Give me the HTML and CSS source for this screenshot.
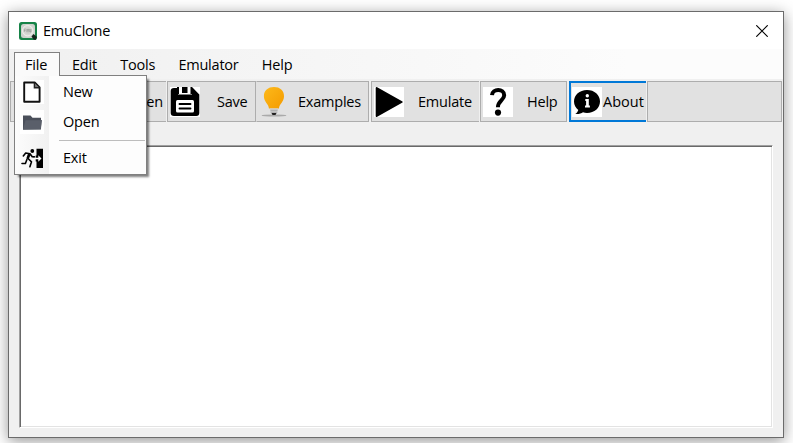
FILE: index.html
```html
<!DOCTYPE html>
<html lang="en">
<head>
<meta charset="utf-8">
<title>EmuClone</title>
<link rel="stylesheet" href="styles.css">
</head>
<body>
<main class="window">
  <header class="titlebar">
    <svg class="app-icon" viewBox="0 0 18 18"><defs><radialGradient id="disc"><stop offset="0" stop-color="#bfc3be"/><stop offset=".6" stop-color="#d9dbd7"/><stop offset="1" stop-color="#cdd1cc"/></radialGradient></defs><rect width="18" height="18" rx="2.500" fill="#168347"/><rect x="2" y="2" width="14" height="14" rx="2.500" fill="url(#disc)"/><circle cx="8.7" cy="8.7" r="5.2" fill="none" stroke="#f0f0ec" stroke-width=".9"/><path d="M5.3 10V7h1.5M5.3 8.5h1.2M8 10V7l1 1.5L10 7v3M11 7v3h1V7" fill="none" stroke="#8e948e" stroke-width=".6"/><path d="M12.500 14.500l2-2.500 3.500 3-1.400 3-2-.4z" fill="#14251b"/></svg>
    <h1 class="title">EmuClone</h1>
    <svg class="close" viewBox="0 0 12 12"><path d="M.3.3l11.4 11.4M11.7.3L.3 11.7" stroke="#000" stroke-width="1.15"/></svg>
  </header>
  <nav class="menubar">
    <div class="menu-item file">File
      <div class="dropdown">
        <div class="row">
          <svg class="menu-icon" viewBox="0 0 24 24"><rect width="24" height="24" fill="#fff"/><path d="M4.200 2.500h10.500l4.900 4.900v14.300H4.200z" fill="#fff" stroke="#111" stroke-width="1.900" stroke-linejoin="round"/><path d="M14.400 2.800v4.900h5" fill="#777" stroke="#222" stroke-width="1.400"/></svg>
          <span>New</span>
        </div>
        <div class="row">
          <svg class="menu-icon" viewBox="0 0 24 24"><rect width="24" height="24" fill="#fff"/><path d="M3 5.5h7.5l2 2.3H21V10h.8l-.9 9.5L3 19.8z" fill="#4b505b"/><path d="M3.2 19.3l2.3-9.1h16.2l-1 9.1z" fill="#5a5f6a"/></svg>
          <span>Open</span>
        </div>
        <div class="divider"></div>
        <div class="row">
          <svg class="menu-icon" viewBox="0 0 24 24"><path d="M16.500 2.700H23v19.200h-6.500v-6.500h-.8v-6h.8z" fill="#000"/><circle cx="12.300" cy="5" r="1.900" fill="#000"/><path d="M8 7.600l2.800.8-2.300 5-2.200-.9z" fill="#000"/><path d="M3.300 10l2.400-3 4.300.7 2.200 3 2.200.2M8.600 13l2.900 2.800-1.600 5M6.900 13.500l-1.500 4H2" fill="none" stroke="#000" stroke-width="1.600" stroke-linecap="round" stroke-linejoin="round"/><path d="M14.500 12.500h5" stroke="#fff" stroke-width="1.500"/><path d="M18.300 9.300l3.200 3.200-3.200 3.200z" fill="#fff"/></svg>
          <span>Exit</span>
        </div>
      </div>
    </div>
    <div class="menu-item">Edit</div>
    <div class="menu-item">Tools</div>
    <div class="menu-item">Emulator</div>
    <div class="menu-item">Help</div>
  </nav>
  <div class="toolbar">
    <div class="tool new"></div>
    <div class="tool open">Open</div>
    <div class="tool save">
      <svg class="tool-icon" viewBox="0 0 30 30"><rect width="30" height="30" fill="#fff"/><path d="M4 1h19l6.300 6.500V26q0 3-3 3H4q-3.300 0-3.300-3V4Q.7 1 4 1z" fill="#000"/><path d="M8 0h14v7.500H8z" fill="#fff"/><path d="M12 0h5.500v6H12zM7 0h2v7H7zM20.500 0h2v7h-2z" fill="#000"/><rect x="6" y="13" width="18" height="12.500" rx="1.500" fill="#fff"/><path d="M9.500 17h11M9.500 21.500h11" stroke="#000" stroke-width="1.900" stroke-linecap="round"/></svg>
      <span>Save</span>
    </div>
    <div class="tool examples">
      <svg class="tool-icon" viewBox="0 0 30 30"><defs><linearGradient id="bulb" x2="1" y2="1"><stop stop-color="#fdb91a"/><stop offset="1" stop-color="#f49b00"/></linearGradient></defs><ellipse cx="14" cy="28.500" rx="12.500" ry="1.100" fill="#aaa"/><path d="M8.900 21.500c0-4.500-5-6.500-5-12.300C3.900 3.500 8 .1 14 .1s10 3.400 10 9.100c0 5.800-5 7.800-5 12.300z" fill="url(#bulb)"/><path d="M9.800 21.500h8.400l-.8 4-2 2h-3l-2-2z" fill="#d0d1d2"/><path d="M10.500 23.300h7M10.700 25.200h6.500" stroke="#999" stroke-width=".7"/><path d="M11.500 26h5l-1 2h-3z" fill="#222"/></svg>
      <span>Examples</span>
    </div>
    <div class="tool emulate">
      <svg class="tool-icon" viewBox="0 0 30 30"><rect width="30" height="30" fill="#fff"/><path d="M2.700 1.100L27.600 15 2.700 28.900z" fill="#000" stroke="#000" stroke-width="2" stroke-linejoin="round"/></svg>
      <span>Emulate</span>
    </div>
    <div class="tool help">
      <svg class="tool-icon" viewBox="0 0 30 30"><rect width="30" height="30" fill="#fff"/><path d="M9 8.200C9.300 1.300 21.200 1.300 21.200 8.200c0 5-6.300 5.500-6.300 12" fill="none" stroke="#000" stroke-width="4"/><circle cx="15" cy="25.600" r="3.100" fill="#000"/></svg>
      <span>Help</span>
    </div>
    <div class="tool about">
      <svg class="tool-icon" viewBox="0 0 30 30"><rect width="30" height="30" fill="#fff"/><path d="M15 3C7.500 3 2 8 2 14.500c0 3.500 1.700 6.500 4.300 8.500-.4 1.500-1.500 3-3 4 3 .4 5.900-.4 7.700-1.700 1.300.4 2.600.6 4 .6 7.500 0 13-5 13-11.500S22.500 3 15 3z" fill="#000"/><circle cx="15.300" cy="8.700" r="1.700" fill="#fff"/><path d="M13.300 12h3.500v6.500h1.100v2h-4.900v-2h1.100V14h-.8z" fill="#fff"/></svg>
      <span>About</span>
    </div>
    <div class="tool blank"></div>
  </div>
  <div class="editor"></div>
</main>
</body>
</html>
```
FILE: styles.css
```css
* { box-sizing: border-box; }
body {
  margin: 0;
  height: 443px;
  padding: 11px 9px 5px 8px;
  overflow: hidden;
  background: #fff;
  color: #000;
  font: 14.5px/20px "Open Sans", "Noto Sans", sans-serif;
  letter-spacing: -.22px;
}
.window {
  display: flex;
  flex-direction: column;
  height: 427px;
  border: 1px solid #6b6b6b;
  background: #f0f0f0;
  box-shadow: 0 3px 14px rgba(0, 0, 0, .42);
}
.titlebar {
  display: flex;
  align-items: center;
  flex: 0 0 37px;
  padding: 0 15px 0 10px;
  background: #fff;
}
.app-icon { width: 18px; height: 18px; }
.title { margin: 0 auto 0 6px; font: inherit; }
.close { width: 12px; height: 12px; }
.menubar {
  display: flex;
  flex: 0 0 30px;
  padding: 3px 0 0 5px;
  background: linear-gradient(90deg, #f0f0f0, #fcfcfc 80%);
}
.menu-item { height: 24px; padding: 3px 11.3px 0 12px; line-height: 20px; white-space: nowrap; }
.file {
  position: relative;
  z-index: 2;
  width: 46px;
  padding: 2px 0 0 10px;
  border: 1px solid #808080;
  border-bottom: 0;
  background: #fafafa;
}
.dropdown {
  position: absolute;
  top: 22px;
  left: -1px;
  width: 133px;
  height: 100px;
  padding: 3px 0 0;
  border: 1px solid #808080;
  background: linear-gradient(90deg, #fcfcfc, #f1f1f1 34px, #fdfdfd 34px);
  box-shadow: 3px 3px 2px -1px rgba(0, 0, 0, .5);
}
.dropdown::before {
  content: "";
  position: absolute;
  top: -1px;
  left: 0;
  width: 44px;
  height: 1px;
  background: #fafafa;
}
.row { display: flex; align-items: center; height: 30px; padding: 0 0 5px 5px; gap: 19px; }
.row:first-child, .row:nth-child(2) { padding-bottom: 4px; }
.row:last-child { padding-bottom: 2px; }
.menu-icon { width: 24px; height: 24px; }
.divider { height: 1px; margin: 1px 1px 3px 44px; background: #bdbdbd; }
.toolbar { display: flex; flex: 0 0 41px; margin: 2px 0 0 1px; }
.tool {
  display: flex;
  align-items: center;
  border: 1px solid #adadad;
  background: #e1e1e1;
  white-space: nowrap;
}
.tool-icon { flex: 0 0 30px; width: 30px; height: 30px; }
.new { width: 78px; }
.open { width: 78px; padding-left: 37.5px; border-right: 0; }
.save { width: 89px; margin-left: 1px; padding-left: 2px; gap: 17px; }
.examples { width: 113px; padding-left: 3px; gap: 8px; border-left-color: #e1e1e1; }
.emulate { width: 108px; margin-left: 2px; padding-left: 2px; gap: 14px; border-right: 0; }
.help { width: 87px; margin-left: 1px; padding-left: 2px; gap: 14px; }
.about { width: 77px; margin-left: 2px; padding-left: 1px; gap: 1px; border: 2px solid #0078d7; border-right: 0; }
.about span { letter-spacing: 0; }
.blank { width: 135px; margin-left: 1px; }
.editor {
  height: 283px;
  margin: 23px 10px 0;
  border: 1px solid;
  border-color: #a0a0a0 #fff #fff #a0a0a0;
  background: #fff;
  box-shadow: inset 1px 1px #696969, inset -1px -1px #e3e3e3;
}
```
